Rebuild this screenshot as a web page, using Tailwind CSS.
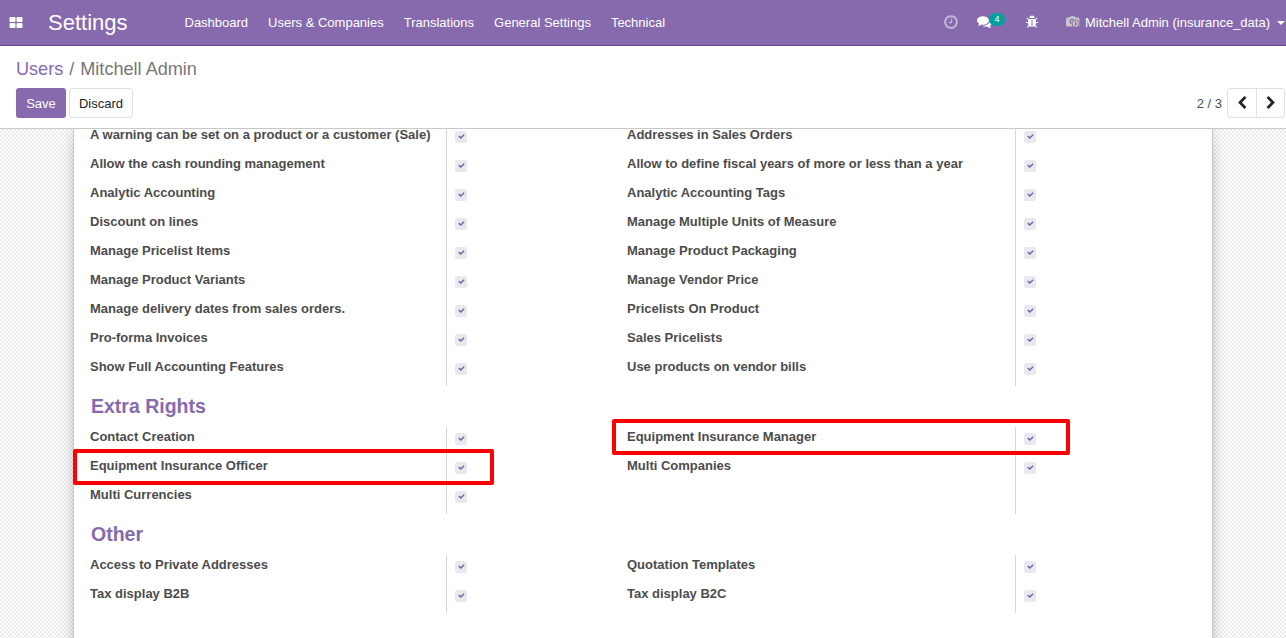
<!DOCTYPE html>
<html lang="en">
<head>
<meta charset="utf-8">
<title>Settings</title>
<script src="https://cdn.jsdelivr.net/npm/@tailwindcss/browser@4"></script>
</head>
<body class="h-[638px] w-[1286px] overflow-hidden bg-white font-['Liberation_Sans',Arial,sans-serif] text-[13px] leading-5 text-[#4c4c4c]">
<svg class="hidden">
  <symbol id="check" viewBox="0 0 1792 1792"><path d="M1671 566q0 40-28 68l-724 724-136 136q-28 28-68 28t-68-28l-136-136-362-362q-28-28-28-68t28-68l136-136q28-28 68-28t68 28l294 295 656-657q28-28 68-28t68 28l136 136q28 28 28 68z"/></symbol>
</svg>
<div class="flex h-[638px] flex-col">
  <nav class="flex h-[46px] shrink-0 items-center border-b border-[#68479a] bg-[#866aad] text-white">
    <svg class="ml-[9px] size-3.5 fill-white" viewBox="0 0 1792 1792"><path d="M832 1024v384q0 52-38 90t-90 38h-512q-52 0-90-38t-38-90v-384q0-52 38-90t90-38h512q52 0 90 38t38 90zm0-768v384q0 52-38 90t-90 38h-512q-52 0-90-38t-38-90v-384q0-52 38-90t90-38h512q52 0 90 38t38 90zm896 768v384q0 52-38 90t-90 38h-512q-52 0-90-38t-38-90v-384q0-52 38-90t90-38h512q52 0 90 38t38 90zm0-768v384q0 52-38 90t-90 38h-512q-52 0-90-38t-38-90v-384q0-52 38-90t90-38h512q52 0 90 38t38 90z"/></svg>
    <span class="ml-[25px] w-[136.500px] text-[22px]">Settings</span>
    <div class="flex gap-5 whitespace-nowrap">
      <span>Dashboard</span><span>Users &amp; Companies</span><span>Translations</span><span>General Settings</span><span>Technical</span>
    </div>
    <div class="ml-auto flex items-center whitespace-nowrap">
      <svg class="mr-[18px] mb-0.5 size-4 fill-white/50" viewBox="0 0 1792 1792"><path d="M1024 544v448q0 14-9 23t-23 9h-320q-14 0-23-9t-9-23v-64q0-14 9-23t23-9h224v-352q0-14 9-23t23-9h64q14 0 23 9t9 23zm416 352q0-148-73-273t-198-198-273-73-273 73-198 198-73 273 73 273 198 198 273 73 273-73 198-198 73-273zm224 0q0 209-103 385.5t-279.5 279.5-385.5 103-385.5-103-279.5-279.5-103-385.5 103-385.5 279.5-279.5 385.5-103 385.5 103 279.5 279.5 103 385.5z"/></svg>
      <div class="relative mr-[33px] mb-0.5 size-[15px]">
        <svg class="size-[15px] fill-white" viewBox="0 0 1792 1792"><path d="M1408 768q0 139-94 257t-256.5 186.5-353.5 68.5q-86 0-176-16-124 88-278 128-36 9-86 16h-3q-11 0-20.5-8t-11.5-21q-1-3-1-6.5t.5-6.5 2-6l2.5-5 3.5-5.5 4-5 4.5-5 4-4.5q5-6 23-25t26-29.5 22.5-29 25-38.5 20.5-44q-124-72-195-177t-71-224q0-139 94-257t256.5-186.5 353.5-68.5 353.5 68.5 256.5 186.5 94 257zm384 256q0 120-71 224.5t-195 176.5q10 24 20.5 44t25 38.5 22.5 29 26 29.5 23 25q1 1 4 4.5t4.5 5 4 5 3.5 5.5l2.5 5 2 6 .5 6.5-1 6.5q-3 14-13 22t-22 7q-50-7-86-16-154-40-278-128-90 16-176 16-271 0-472-132 58 4 88 4 161 0 309-45t264-129q125-92 192-212t67-254q0-77-23-152 129 71 204 178t75 230z"/></svg>
        <span class="absolute -top-px left-[12px] h-[13px] w-4 rounded-full bg-[#00a09d] text-center text-[9px] leading-[13px]">4</span>
      </div>
      <svg class="mr-[27px] mb-px size-[14px] fill-white" viewBox="0 0 1792 1792"><path d="M1696 960q0 26-19 45t-45 19h-224q0 171-67 290l208 209q19 19 19 45t-19 45q-18 19-45 19t-45-19l-198-197q-5 5-15 13t-42 28.5-65 36.5-82 29-97 13v-896h-128v896q-51 0-101.5-13.5t-87-33-66-39-43.5-32.5l-15-14-183 207q-20 21-48 21-24 0-43-16-19-18-20.5-44.5t15.5-46.5l202-227q-58-114-58-274h-224q-26 0-45-19t-19-45 19-45 45-19h224v-294l-173-173q-19-19-19-45t19-45 45-19 45 19l173 173h844l173-173q19-19 45-19t45 19 19 45-19 45l-173 173v294h224q26 0 45 19t19 45zm-480-576h-640q0-133 93.5-226.5t226.5-93.5 226.5 93.5 93.5 226.5z"/></svg>
      <svg class="mr-[5px] mb-px h-3 w-3.5" viewBox="0 0 14 12"><path fill="#c9c5c6" d="M1.500 1.500H3.600L4.400.3H8.800L9.600 1.500H12a1.500 1.500 0 0 1 1.500 1.500V9.500A1 1 0 0 1 12.500 10.500H1.500A1.500 1.500 0 0 1 0 9V3A1.500 1.500 0 0 1 1.500 1.500Z"/><path d="M7.500 3.500A2.200 2.200 0 1 0 5.500 7.500" fill="none" stroke="#866aad" stroke-width="1.200"/><circle cx="9.700" cy="7.600" r="3.700" fill="#c9c5c6" stroke="#866aad" stroke-width=".9"/><path d="M9.500 5.500v4.300" stroke="#866aad" stroke-width="1"/><path d="M11.200 6.800v2" stroke="#866aad" stroke-width=".8"/></svg>
      <span>Mitchell Admin (insurance_data)</span>
      <span class="mr-px ml-[7px] h-0 w-0 border-x-4 border-t-4 border-x-transparent border-t-white"></span>
    </div>
  </nav>

  <header class="flex h-[83px] shrink-0 flex-col border-b border-[#c8c8ca] bg-white">
    <div class="mt-[13px] ml-4 text-[18.100px] leading-5 text-[#777]"><span class="text-[#866aad]">Users</span><span class="mx-[6px]">/</span><span>Mitchell Admin</span></div>
    <div class="mt-[9px] flex items-center pr-px pl-4">
      <button class="h-[30px] w-[50px] rounded-[3px] bg-[#866aad] pt-0.5 text-white">Save</button>
      <button class="ml-[3px] h-[30px] w-16 rounded-[3px] border border-[#dee0e8] pt-0.5 text-[#212529]">Discard</button>
      <span class="mr-[5px] ml-auto pt-0.5">2 / 3</span>
      <div class="flex h-[30px] w-[58px] rounded-[3px] border border-[#dee0e8]">
        <button class="flex w-[29px] items-center justify-center border-r border-[#dee0e8]"><svg class="size-[14px] fill-[#212529]" viewBox="0 0 1792 1792"><path d="M1427 301l-531 531 531 531q19 19 19 45t-19 45l-166 166q-19 19-45 19t-45-19l-742-742q-19-19-19-45t19-45l742-742q19-19 45-19t45 19l166 166q19 19 19 45t-19 45z"/></svg></button>
        <button class="flex w-[27px] items-center justify-center"><svg class="size-[14px] fill-[#212529]" viewBox="0 0 1792 1792"><path d="M1363 877l-742 742q-19 19-45 19t-45-19l-166-166q-19-19-19-45t19-45l531-531-531-531q-19-19-19-45t19-45l166-166q19-19 45-19t45 19l742 742q19 19 19 45t-19 45z"/></svg></button>
      </div>
    </div>
  </header>

  <main class="relative min-h-0 flex-1 overflow-hidden bg-[repeating-conic-gradient(#ebebeb_0_25%,#ffffff_0_50%)] bg-size-[4px_4px] px-[73px]">
    <div id="sheet" class="-mt-1 h-[600px] border-x border-[#c8c8d3] bg-white px-4 shadow-[0_5px_20px_-15px_#000,0_0_14px_rgba(0,0,0,0.10)]"></div>
    <div class="absolute top-[290px] left-[612px] h-9 w-[458px] rounded-[2px] border-4 border-[#ff0000]"></div>
    <div class="absolute top-[320px] left-[73px] h-9 w-[421px] rounded-[2px] border-4 border-[#ff0000]"></div>
  </main>
</div>
<script>
const sections = [
  ['', [
    ['A warning can be set on a product or a customer (Sale)', 'Addresses in Sales Orders'],
    ['Allow the cash rounding management', 'Allow to define fiscal years of more or less than a year'],
    ['Analytic Accounting', 'Analytic Accounting Tags'],
    ['Discount on lines', 'Manage Multiple Units of Measure'],
    ['Manage Pricelist Items', 'Manage Product Packaging'],
    ['Manage Product Variants', 'Manage Vendor Price'],
    ['Manage delivery dates from sales orders.', 'Pricelists On Product'],
    ['Pro-forma Invoices', 'Sales Pricelists'],
    ['Show Full Accounting Features', 'Use products on vendor bills']]],
  ['Extra Rights', [
    ['Contact Creation', 'Equipment Insurance Manager'],
    ['Equipment Insurance Officer', 'Multi Companies'],
    ['Multi Currencies', '']]],
  ['Other', [
    ['Access to Private Addresses', 'Quotation Templates'],
    ['Tax display B2B', 'Tax display B2C']]]
];
const box = '<span class="mt-1.5 flex size-3 items-center justify-center rounded-[2.500px] bg-[#e8e8ee] pb-px"><svg class="size-[7px] fill-[#7c5fa8]"><use href="#check"/></svg></span>';
const field = (t) => `<div class="h-[29px] border-l border-[#d5d5d8] pl-2">${t ? box : ''}</div>`;
document.getElementById('sheet').innerHTML = sections.map(([title, rows]) =>
  (title ? `<h2 class="h-[41px] pt-[10px] pl-px text-[19.500px] leading-5 font-bold text-[#866aad]">${title}</h2>` : '') +
  `<div class="grid grid-cols-[356px_181px_388px_1fr] font-bold whitespace-nowrap">` +
  rows.map(([a, b]) => `<div>${a}</div>${field(a)}<div>${b}</div>${field(b)}`).join('') + '</div>').join('');
</script>
</body>
</html>
